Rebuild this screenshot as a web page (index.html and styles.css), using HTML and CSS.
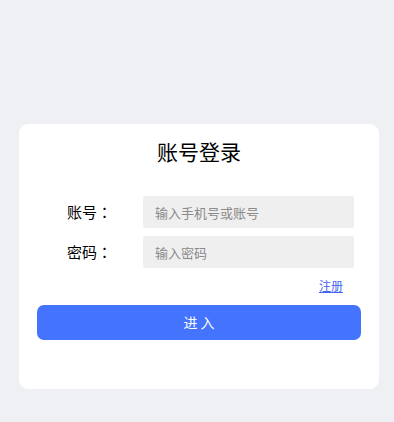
FILE: index.html
```html
<!DOCTYPE html>
<html lang="zh-CN">
<head>
<meta charset="utf-8">
<title>账号登录</title>
<link rel="stylesheet" href="styles.css">
</head>
<body>
<div class="page">
  <div class="card">
    <h1 class="title">账号登录</h1>
    <div class="form">
      <div class="row">
        <label class="label">账号<span class="colon" lang="zh-TW">：</span></label>
        <input class="input" type="text" placeholder="输入手机号或账号">
      </div>
      <div class="row">
        <label class="label">密码<span class="colon" lang="zh-TW">：</span></label>
        <input class="input" type="password" placeholder="输入密码">
      </div>
    </div>
    <div class="links"><a class="link" href="#">注册</a></div>
    <button class="btn" type="button">进 入</button>
  </div>
</div>
</body>
</html>
```
FILE: styles.css
```css
* { box-sizing: border-box; }
html, body {
  margin: 0;
  padding: 0;
  background: #eff0f4;
  font-family: "Noto Sans CJK SC", "Noto Sans", sans-serif;
}
.page {
  padding: 124px 15px 0 19px;
}
.card {
  width: 360px;
  height: 265px;
  background: #ffffff;
  border-radius: 9px;
  padding: 12px 18px 0 18px;
}
.title {
  margin: 0;
  font-size: 21px;
  font-weight: 400;
  line-height: 30px;
  text-align: center;
  color: #000;
}
.form {
  margin-top: 30px;
  display: flex;
  flex-direction: column;
  gap: 8px;
}
.row {
  display: flex;
  align-items: center;
  padding-left: 30px;
}
.label {
  width: 76px;
  font-size: 15px;
  color: #000;
  line-height: 32px;
}
.colon {
  font-family: "Noto Sans CJK TC", "Noto Sans CJK SC", sans-serif;
}
.input {
  width: 211px;
  height: 32px;
  border: none;
  outline: none;
  background: #efefef;
  border-radius: 2px;
  padding: 0 12px;
  font-family: inherit;
  font-size: 13px;
  color: #333;
}
.input::placeholder { color: #8a8a8a; }
.links {
  display: flex;
  justify-content: flex-end;
  padding-right: 18px;
  margin-top: 8px;
  line-height: 20px;
}
.link {
  font-size: 12px;
  color: #4466f2;
  text-decoration: underline;
}
.btn {
  display: block;
  margin-top: 9px;
  width: 324px;
  height: 35px;
  border: none;
  border-radius: 7px;
  background: #4473fe;
  color: #fff;
  font-family: inherit;
  font-size: 14px;
  line-height: 33px;
  padding: 0;
}
```
